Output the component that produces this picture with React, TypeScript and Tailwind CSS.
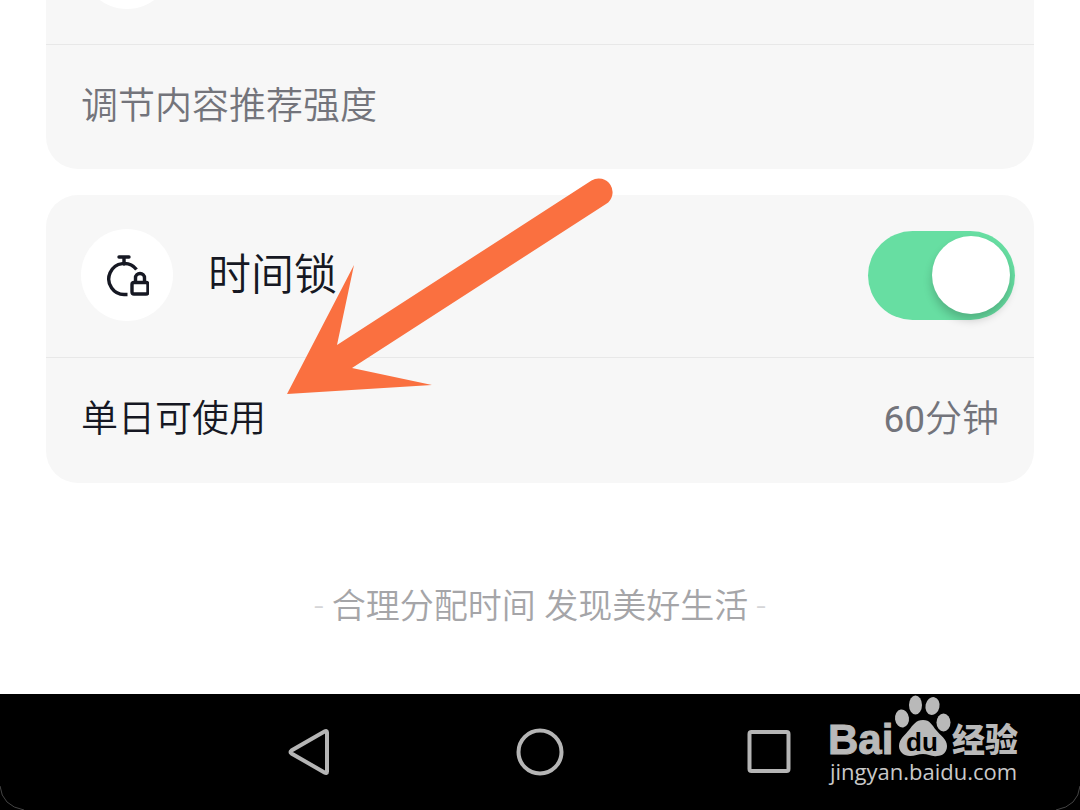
import { ReactNode, useState } from "react";

type NavItem = {
  label: string;
  icon: ReactNode;
};

const navItems: NavItem[] = [
  { label: "返回", icon: <path d="M38.500 3.500L5.500 22.500Q3.500 24 5.500 25.500L38.500 44.500Q41 46 41 43.500V4.500Q41 2 38.500 3.500Z" /> },
  { label: "主屏幕", icon: <circle cx="24" cy="24" r="21.500" /> },
  { label: "最近任务", icon: <rect x="3.500" y="4" width="39" height="39" rx="2" /> },
];

function IconTimeLock() {
  return (
    <svg viewBox="0 0 44 44" fill="none" stroke="#161823" strokeWidth="3.400" className="size-11">
      <path d="M14 4H24M19 4V11" strokeLinecap="round" />
      <path d="M22.500 41.500H20.500A15.500 15.500 0 1 1 31.500 16.500" />
      <rect x="27" y="29.500" width="16" height="11.500" rx="2" />
      <path d="M30.500 28.500V25a4.500 4.500 0 0 1 9 0V28.500" />
    </svg>
  );
}

function Arrow() {
  return (
    <svg
      viewBox="287 178 326 217"
      aria-hidden="true"
      className="pointer-events-none absolute left-[241px] -top-[17px] h-[217px] w-[326px]"
    >
      <path
        fill="#fa7040"
        d="M287 394L354 265L337 345L591.500 180.500A13.800 13.800 0 0 1 606 204L352 368L432 385Z"
      />
    </svg>
  );
}

function Watermark() {
  return (
    <div className="pointer-events-none absolute right-[52px] bottom-[22px]">
      <svg viewBox="0 0 200 94" fill="#b9b9b9" className="h-[94px] w-[200px]">
        <text x="0" y="60" fontSize="42" fontWeight="700" stroke="#b9b9b9" strokeWidth="1" className="font-['Liberation_Sans']">
          Bai
        </text>
        <ellipse cx="74" cy="24.500" rx="7" ry="9" transform="rotate(-8 74 24.500)" />
        <ellipse cx="87.500" cy="11" rx="6.500" ry="9.500" />
        <ellipse cx="104.500" cy="12" rx="7" ry="9" transform="rotate(12 104.500 12)" />
        <ellipse cx="115.500" cy="28.500" rx="7" ry="9" />
        <path d="M95 26C88 26 85 31 81 36C77 41 71 45 71 52C71 58 76 62 82 62C87 62 90 60 95 60C100 60 104 63 109 62C115 62 119 58 119 52C119 45 112 41 108 36C104 31 102 26 95 26Z" />
        <text x="78" y="57" fontSize="26" fontWeight="700" fill="#000" className="font-['Liberation_Sans']">
          du
        </text>
        <text x="124" y="58" fontSize="33" fontWeight="900" className="font-['Noto_Sans_CJK_SC']">
          经验
        </text>
        <text x="2" y="86" fontSize="22" fontWeight="500" fill="#c9c9c9" className="font-['Open_Sans']">
          jingyan.baidu.com
        </text>
      </svg>
    </div>
  );
}

export default function App() {
  const [locked, setLocked] = useState(true);

  return (
    <div className="flex min-h-screen flex-col bg-white font-['Roboto','Noto_Sans_CJK_SC',sans-serif] font-[350] text-[#161823]">
      <main className="flex grow flex-col gap-[26px] px-[46px]">
        <section className="rounded-b-[32px] bg-[#f7f7f7]">
          <div className="flex h-11 items-end overflow-hidden px-[35px] pb-[35px]">
            <span className="size-[92px] shrink-0 rounded-full bg-white" />
          </div>
          <p className="border-t border-[#e8e8e8] px-[35px] pt-[34px] pb-[35px] text-[37px] leading-[55px] text-[#73747b]">
            调节内容推荐强度
          </p>
        </section>

        <section className="relative rounded-[32px] bg-[#f7f7f7]">
          <div className="flex items-center pt-[34px] pr-[19px] pb-[36px] pl-[35px]">
            <span className="flex size-[92px] items-center justify-center rounded-full bg-white">
              <IconTimeLock />
            </span>
            <label htmlFor="time-lock" className="grow pl-[35px] text-[43px] leading-[64px]">
              时间锁
            </label>
            <input
              id="time-lock"
              type="checkbox"
              role="switch"
              checked={locked}
              onChange={(e) => setLocked(e.target.checked)}
              className="flex h-[89px] w-[147px] cursor-pointer appearance-none items-center rounded-full bg-gray-300 px-[5px] before:size-[78px] before:rounded-full before:bg-white before:shadow-[0_6px_10px_rgba(0,0,0,0.2)] before:content-[''] checked:justify-end checked:bg-[#67dea2]"
            />
          </div>
          <div className="flex justify-between border-t border-[#e8e8e8] px-[35px] pt-[34px] pb-[36px] text-[37px] leading-[55px]">
            <span>单日可使用</span>
            <span className="text-[#73747b]">
              <span className="font-normal">60</span>分钟
            </span>
          </div>
          <Arrow />
        </section>

        <p className="flex grow items-center justify-center gap-2 pt-2 text-[34px] leading-[52px] text-[#a5a5a8]">
          <span className="text-[#d5d5d7]">-</span>
          合理分配时间 发现美好生活
          <span className="text-[#d5d5d7]">-</span>
        </p>
      </main>

      <nav className="relative flex h-[116px] items-center justify-center gap-[182px] bg-black">
        {navItems.map((item) => (
          <button key={item.label} type="button" aria-label={item.label} className="cursor-pointer">
            <svg viewBox="0 0 48 48" fill="none" stroke="#b5b5b5" strokeWidth="4" className="size-12">
              {item.icon}
            </svg>
          </button>
        ))}
        <Watermark />
        <svg viewBox="0 0 24 24" fill="none" stroke="#444" className="absolute bottom-0 left-0 size-6">
          <path d="M0 0Q2 20 24 24" />
        </svg>
        <svg viewBox="0 0 24 24" fill="none" stroke="#444" className="absolute right-0 bottom-0 size-6">
          <path d="M24 0Q22 20 0 24" />
        </svg>
      </nav>
    </div>
  );
}
